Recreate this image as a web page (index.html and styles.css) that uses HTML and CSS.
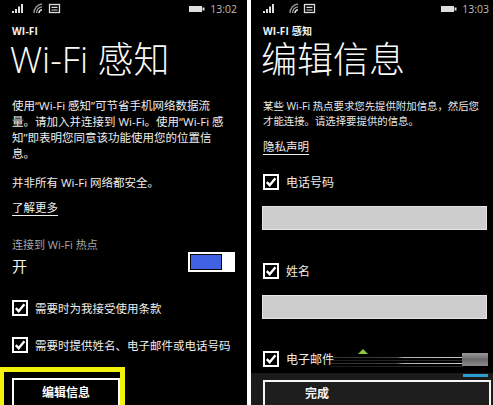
FILE: index.html
```html
<!DOCTYPE html>
<html lang="zh-CN">
<head>
<meta charset="utf-8">
<title>Wi-Fi 感知</title>
<link rel="stylesheet" href="styles.css">
</head>
<body>
<div class="screens">
  <section class="phone phone-left">
    <div class="status">
      <svg class="icons" width="60" height="16" viewBox="0 0 60 16">
        <rect x="1" y="10" width="2" height="2" fill="#ddd"/>
        <rect x="4" y="8" width="2" height="4" fill="#ddd"/>
        <rect x="7" y="5.5" width="2" height="6.5" fill="#ddd"/>
        <rect x="10" y="3" width="2" height="9" fill="#ddd"/>
        <path d="M23 12 A9 9 0 0 1 31 3" stroke="#999" stroke-width="1.3" fill="none"/>
        <path d="M25.5 12 A6.5 6.5 0 0 1 31 5.8" stroke="#999" stroke-width="1.3" fill="none"/>
        <path d="M28 12 A3.5 3.5 0 0 1 31 8.8" stroke="#ddd" stroke-width="1.5" fill="none"/>
        <rect x="38.5" y="3.5" width="10" height="8" stroke="#ddd" stroke-width="1.3" fill="none"/>
        <path d="M40.5 6.3 H46.5 M40.5 9 H46.5" stroke="#ddd" stroke-width="1.2"/>
      </svg>
      <div class="status-right">
        <svg width="18" height="16" viewBox="0 0 18 16"><rect x="1" y="5" width="13" height="6" fill="#ddd"/><rect x="14.5" y="6.5" width="2" height="3" fill="#ddd"/></svg>
        <span class="time">13:02</span>
      </div>
    </div>
    <div class="label">WI-FI</div>
    <h1 class="title">Wi-Fi 感知</h1>
    <p class="desc">使用“Wi-Fi 感知”可节省手机网络数据流<br>量。请加入并连接到 Wi-Fi。使用“Wi-Fi 感<br>知”即表明您同意该功能使用您的位置信<br>息。</p>
    <p class="desc desc-second">并非所有 Wi-Fi 网络都安全。</p>
    <a class="link link-left">了解更多</a>
    <div class="toggle-row">
      <div>
        <div class="sublabel">连接到 Wi-Fi 热点</div>
        <div class="state">开</div>
      </div>
      <div class="toggle"><div class="track"><div class="fill"></div></div><div class="thumb"></div></div>
    </div>
    <div class="check check-a">
      <svg class="box" width="16" height="16" viewBox="0 0 16 16"><rect x="1" y="1" width="14" height="14" stroke="#fff" stroke-width="2" fill="none"/><path d="M3.8 8.2 L6.7 11.2 L12.4 4.3" stroke="#fff" stroke-width="2.4" fill="none"/></svg>
      <span>需要时为我接受使用条款</span>
    </div>
    <div class="check check-b">
      <svg class="box" width="16" height="16" viewBox="0 0 16 16"><rect x="1" y="1" width="14" height="14" stroke="#fff" stroke-width="2" fill="none"/><path d="M3.8 8.2 L6.7 11.2 L12.4 4.3" stroke="#fff" stroke-width="2.4" fill="none"/></svg>
      <span>需要时提供姓名、电子邮件或电话号码</span>
    </div>
    <div class="highlight"><div class="btn">编辑信息</div></div>
  </section>

  <section class="phone phone-right">
    <div class="status">
      <svg class="icons" width="60" height="16" viewBox="0 0 60 16">
        <rect x="1" y="10" width="2" height="2" fill="#ddd"/>
        <rect x="4" y="8" width="2" height="4" fill="#ddd"/>
        <rect x="7" y="5.5" width="2" height="6.5" fill="#ddd"/>
        <rect x="10" y="3" width="2" height="9" fill="#ddd"/>
        <path d="M28 12 A9 9 0 0 1 36 3" stroke="#999" stroke-width="1.3" fill="none"/>
        <path d="M30.5 12 A6.5 6.5 0 0 1 36 5.8" stroke="#999" stroke-width="1.3" fill="none"/>
        <path d="M33 12 A3.5 3.5 0 0 1 36 8.8" stroke="#ddd" stroke-width="1.5" fill="none"/>
        <rect x="42.5" y="3.5" width="10" height="8" stroke="#ddd" stroke-width="1.3" fill="none"/>
        <path d="M44.5 6.3 H50.5 M44.5 9 H50.5" stroke="#ddd" stroke-width="1.2"/>
      </svg>
      <div class="status-right">
        <svg width="18" height="16" viewBox="0 0 18 16"><rect x="1" y="5" width="13" height="6" fill="#ddd"/><rect x="14.5" y="6.5" width="2" height="3" fill="#ddd"/></svg>
        <span class="time">13:03</span>
      </div>
    </div>
    <div class="label">WI-FI 感知</div>
    <h1 class="title">编辑信息</h1>
    <p class="desc-small">某些 Wi-Fi 热点要求您先提供附加信息，然后您<br>才能连接。请选择要提供的信息。</p>
    <a class="link link-right">隐私声明</a>
    <div class="check check-c">
      <svg class="box" width="16" height="16" viewBox="0 0 16 16"><rect x="1" y="1" width="14" height="14" stroke="#fff" stroke-width="2" fill="none"/><path d="M3.8 8.2 L6.7 11.2 L12.4 4.3" stroke="#fff" stroke-width="2.4" fill="none"/></svg>
      <span>电话号码</span>
    </div>
    <div class="input input-a"></div>
    <div class="check check-d">
      <svg class="box" width="16" height="16" viewBox="0 0 16 16"><rect x="1" y="1" width="14" height="14" stroke="#fff" stroke-width="2" fill="none"/><path d="M3.8 8.2 L6.7 11.2 L12.4 4.3" stroke="#fff" stroke-width="2.4" fill="none"/></svg>
      <span>姓名</span>
    </div>
    <div class="input input-b"></div>
    <div class="check check-e">
      <svg class="box" width="16" height="16" viewBox="0 0 16 16"><rect x="1" y="1" width="14" height="14" stroke="#fff" stroke-width="2" fill="none"/><path d="M3.8 8.2 L6.7 11.2 L12.4 4.3" stroke="#fff" stroke-width="2.4" fill="none"/></svg>
      <span>电子邮件</span>
    </div>
    <div class="appbar"><div class="btn-done"><span>完成</span></div></div>

    <div class="glitch">
      <div class="tri"></div>
      <div class="streak s1"></div>
      <div class="streak s2"></div>
      <div class="streak s3"></div>
      <div class="streak s4"></div>
      <div class="block"></div>
      <div class="blue"></div>
    </div>
  </section>
</div>
</body>
</html>
```

FILE: styles.css
```css
* { box-sizing: border-box; }
html, body { margin: 0; padding: 0; }
body {
  width: 493px;
  height: 405px;
  background: #ffffff;
  overflow: hidden;
  font-family: "Open Sans", "Noto Sans CJK SC", sans-serif;
  color: #f2f2f2;
}
.screens {
  display: flex;
  gap: 4px;
  height: 405px;
}
.phone {
  background: #000;
  height: 405px;
  overflow: hidden;
  position: relative;
  display: flex;
  flex-direction: column;
  align-items: flex-start;
}
.phone > * { flex-shrink: 0; }
.phone-left { width: 247px; padding: 0 12px 0 12px; }
.phone-right { width: 242px; padding: 0 6px 0 12px; }

.status {
  height: 24px;
  width: 100%;
  display: flex;
  justify-content: space-between;
  align-items: flex-start;
  padding-top: 1px;
}
.icons { display: block; margin-left: -1px; }
.status-right { display: flex; align-items: flex-start; gap: 4px; }
.status-right svg { display: block; }
.time {
  font-size: 10.5px;
  line-height: 16px;
  color: #bdbdbd;
  margin-right: -2px;
}

.label {
  font-size: 10px;
  font-weight: 700;
  line-height: 14px;
  height: 14px;
  color: #f4f4f4;
  letter-spacing: 0.2px;
}
.title {
  margin: 2px 0 0 -2px;
  font-size: 36px;
  line-height: 40px;
  height: 40px;
  font-weight: 300;
  white-space: nowrap;
  color: #fafafa;
}
.desc {
  margin: 18px 0 0 0;
  font-size: 11.5px;
  line-height: 16px;
  white-space: nowrap;
  color: #eeeeee;
}
.desc-second { margin-top: 13px; }
.link {
  display: block;
  font-size: 11.5px;
  line-height: 16px;
  text-decoration: underline;
  text-underline-offset: 3px;
  color: #eeeeee;
}
.link-left { margin-top: 9px; }

.toggle-row {
  margin-top: 22px;
  width: 100%;
  display: flex;
  justify-content: space-between;
  align-items: flex-start;
}
.sublabel {
  font-size: 11px;
  line-height: 14px;
  color: #a8a8a8;
}
.state {
  margin-top: 4px;
  font-size: 15px;
  line-height: 20px;
  color: #f4f4f4;
}
.toggle {
  margin-top: 14px;
  display: flex;
  height: 20px;
}
.track {
  width: 36px;
  height: 20px;
  border: 2px solid #fff;
  padding: 1px;
  background: #000;
}
.fill { width: 100%; height: 100%; background: #4262e4; }
.thumb { width: 11px; height: 20px; background: #fff; }

.check {
  display: flex;
  align-items: center;
  gap: 7px;
  height: 16px;
  font-size: 11.5px;
  white-space: nowrap;
  color: #eeeeee;
}
.box { display: block; flex: none; }
.check-a { margin-top: 24px; }
.check-b { margin-top: 21px; }

.highlight {
  margin: 14px 0 0 -12px;
  width: 125px;
  border: 5px solid #f2f20a;
  border-left-width: 4px;
  padding: 6px 0 10px 8px;
  background: #000;
}
.btn {
  width: 108px;
  height: 36px;
  border: 2px solid #fff;
  font-size: 12px;
  font-weight: 700;
  line-height: 26px;
  text-align: center;
  color: #fff;
}

.desc-small {
  margin: 19px 0 0 0;
  font-size: 10.4px;
  line-height: 15px;
  white-space: nowrap;
  color: #e8e8e8;
}
.link-right { margin-top: 10px; }
.check-c { margin-top: 19px; font-size: 12px; }
.check-d { margin-top: 33px; font-size: 12px; }
.check-e { margin-top: 32px; font-size: 12px; }
.input {
  width: 225px;
  height: 24px;
  background: #cdcdcd;
  border: 1px solid #e4e4e4;
}
.input-a { margin-top: 16px; margin-left: -1px; }
.input-b { margin-top: 16px; margin-left: -1px; }

.appbar {
  margin: 6px -6px 0 -12px;
  width: 242px;
  flex: 1 0 auto;
  background: #1b1b1b;
  padding: 7px 2px 0 12px;
}
.btn-done {
  height: 40px;
  border: 2px solid #f4f4f4;
  background: #1e1e1e;
  padding-left: 40px;
  font-size: 12px;
  font-weight: 700;
  line-height: 24px;
  color: #f4f4f4;
}

.glitch {
  position: absolute;
  left: 0;
  top: 0;
  width: 242px;
  height: 405px;
  pointer-events: none;
}
.tri {
  position: absolute;
  left: 107px;
  top: 349px;
  width: 0;
  height: 0;
  border-left: 5px solid transparent;
  border-right: 5px solid transparent;
  border-bottom: 5px solid #8cc63f;
}
.streak {
  position: absolute;
  left: 80px;
  width: 132px;
  height: 1px;
  background: linear-gradient(90deg, rgba(90,90,90,0.5) 0%, rgba(110,110,110,0.6) 50%, #b0b0b0 55%, #c8c8c8 100%);
}
.s1 { top: 357px; }
.s2 { top: 360px; background: linear-gradient(90deg, rgba(70,70,70,0.4), rgba(90,90,90,0.5)); }
.s3 { top: 363px; }
.s4 { top: 366px; background: linear-gradient(90deg, rgba(70,70,70,0.4), rgba(90,90,90,0.5)); }
.block {
  position: absolute;
  left: 211px;
  top: 353px;
  width: 26px;
  height: 13px;
  background: linear-gradient(180deg, #9a9a9a, #6a6a6a 50%, #8a8a8a);
}
.blue {
  position: absolute;
  left: 212px;
  top: 374px;
  width: 25px;
  height: 3px;
  background: #2c9bd0;
}
```
